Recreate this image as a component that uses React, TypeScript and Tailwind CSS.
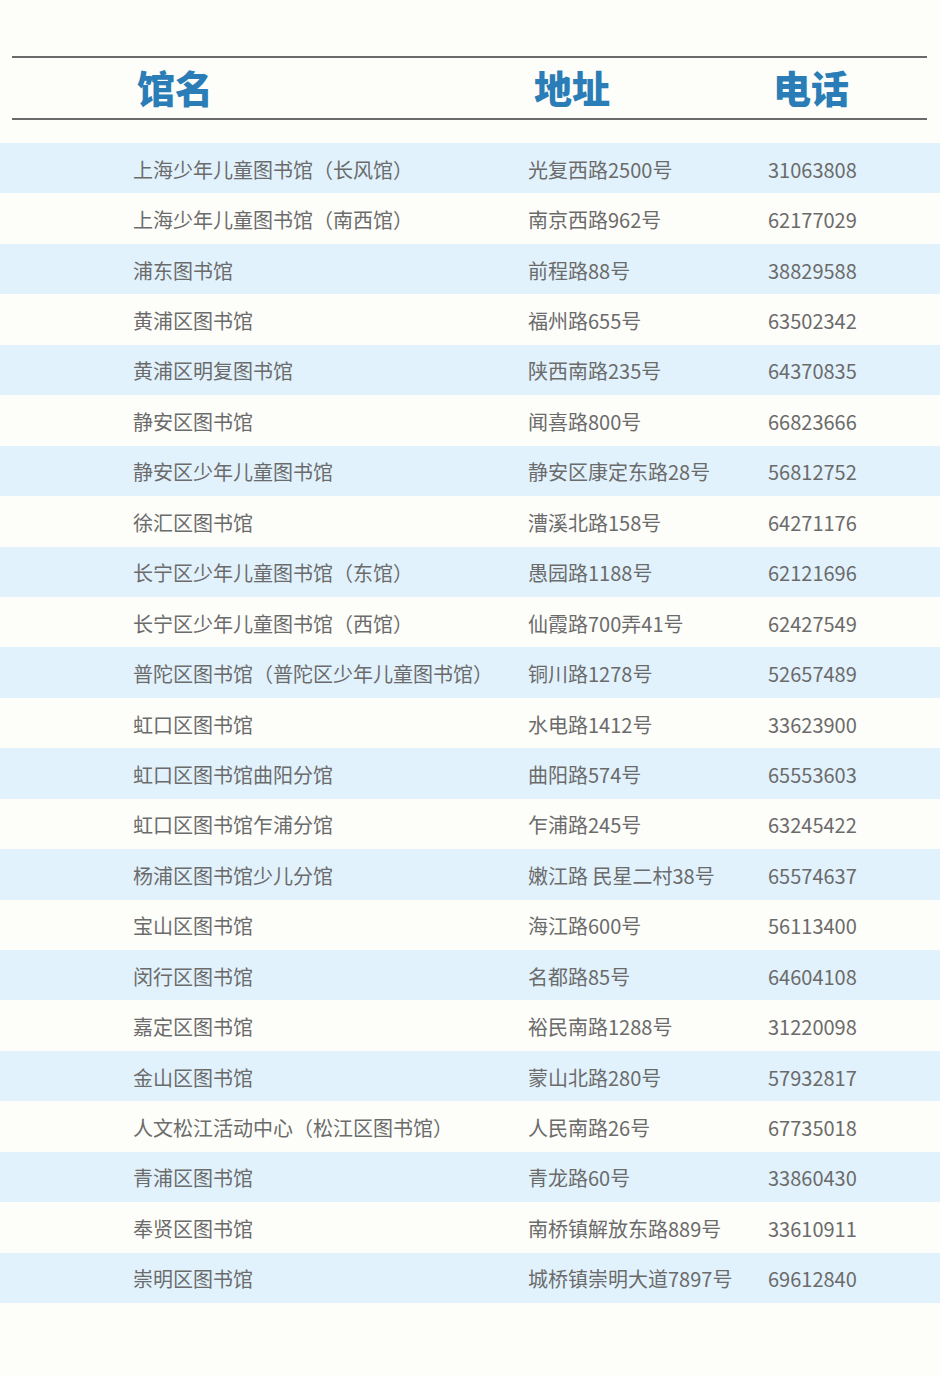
import React from "react";

const rows: [string, string, string][] = [
  ["上海少年儿童图书馆（长风馆）", "光复西路2500号", "31063808"],
  ["上海少年儿童图书馆（南西馆）", "南京西路962号", "62177029"],
  ["浦东图书馆", "前程路88号", "38829588"],
  ["黄浦区图书馆", "福州路655号", "63502342"],
  ["黄浦区明复图书馆", "陕西南路235号", "64370835"],
  ["静安区图书馆", "闻喜路800号", "66823666"],
  ["静安区少年儿童图书馆", "静安区康定东路28号", "56812752"],
  ["徐汇区图书馆", "漕溪北路158号", "64271176"],
  ["长宁区少年儿童图书馆（东馆）", "愚园路1188号", "62121696"],
  ["长宁区少年儿童图书馆（西馆）", "仙霞路700弄41号", "62427549"],
  ["普陀区图书馆（普陀区少年儿童图书馆）", "铜川路1278号", "52657489"],
  ["虹口区图书馆", "水电路1412号", "33623900"],
  ["虹口区图书馆曲阳分馆", "曲阳路574号", "65553603"],
  ["虹口区图书馆乍浦分馆", "乍浦路245号", "63245422"],
  ["杨浦区图书馆少儿分馆", "嫩江路 民星二村38号", "65574637"],
  ["宝山区图书馆", "海江路600号", "56113400"],
  ["闵行区图书馆", "名都路85号", "64604108"],
  ["嘉定区图书馆", "裕民南路1288号", "31220098"],
  ["金山区图书馆", "蒙山北路280号", "57932817"],
  ["人文松江活动中心（松江区图书馆）", "人民南路26号", "67735018"],
  ["青浦区图书馆", "青龙路60号", "33860430"],
  ["奉贤区图书馆", "南桥镇解放东路889号", "33610911"],
  ["崇明区图书馆", "城桥镇崇明大道7897号", "69612840"],
];

export default function App() {
  return (
    <div
      className="w-[940px] h-[1376px] bg-[#fdfdf9] pt-[56px]"
      style={{ fontFamily: '"Noto Sans CJK SC", "Noto Sans", sans-serif' }}
    >
      {/* Header */}
      <div className="mx-[12px] w-[915px] h-[64px] border-t-2 border-b-2 border-[#6a6a6a] flex items-center">
        <div className="w-[125px]" />
        <div className="w-[397px] text-[38px] font-black text-[#2a7db6] leading-none -mt-[3px]">馆名</div>
        <div className="w-[239px] text-[38px] font-black text-[#2a7db6] leading-none -mt-[3px]">地址</div>
        <div className="text-[38px] font-black text-[#2a7db6] leading-none -mt-[3px]">电话</div>
      </div>

      {/* Rows */}
      <div className="mt-[23px]">
        {rows.map(([name, addr, tel], i) => (
          <div
            key={name}
            className={`h-[50.45px] pt-[3px] flex items-center text-[20px] text-[#6b6b6b] ${
              i % 2 === 0 ? "bg-[#e1f2fd]" : "bg-[#fdfdf9]"
            }`}
          >
            <div className="w-[133px]" />
            <div className="w-[395px] whitespace-nowrap">{name}</div>
            <div className="w-[240px] whitespace-nowrap">{addr}</div>
            <div className="whitespace-nowrap">{tel}</div>
          </div>
        ))}
      </div>
    </div>
  );
}
